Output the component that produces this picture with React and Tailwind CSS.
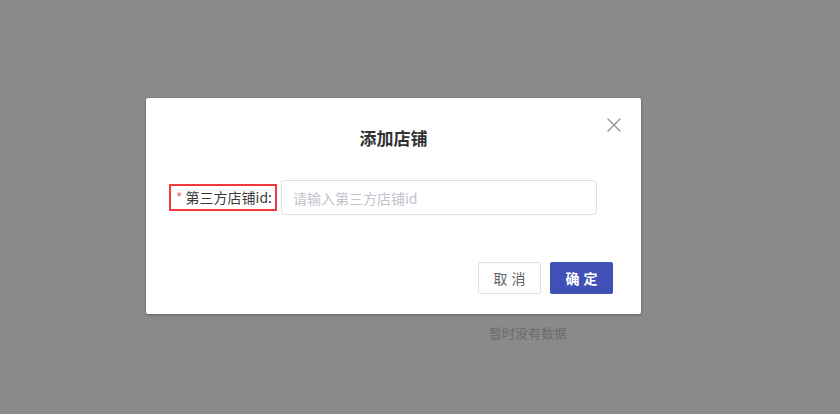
import React from "react";
import { X } from "lucide-react";

const font = { fontFamily: '"Noto Sans CJK SC", "Liberation Sans", sans-serif' };

const App = () => {
  return (
    <div className="relative w-[840px] h-[414px] bg-[#8a8a8a] overflow-hidden" style={font}>
      {/* page content under the mask */}
      <div className="absolute left-[489px] top-[323px] text-[13px] text-[#6b6b6b]">暂时没有数据</div>

      <div className="absolute left-[146px] top-[98px] w-[495px] h-[216px] bg-white rounded-[2px] shadow-[0_1px_3px_rgba(0,0,0,0.3)] flex flex-col">
        <div className="relative h-[78px] flex items-center justify-center">
          <span className="text-[17px] font-bold text-[#303133] mt-[1px]">添加店铺</span>
          <button className="absolute right-[15px] top-[15px] text-[#909399]">
            <X size={24} strokeWidth={1.4} />
          </button>
        </div>

        <div className="flex items-center px-[23px] mt-[4px]">
          <div className="h-[27px] w-[108px] border-2 border-[#ee3a3a] flex items-center pl-[5px] text-[14px] text-[#3a3a3a]">
            <span className="text-[#f56c6c] mr-[3px]">*</span>
            <span>第三方店铺id:</span>
          </div>
          <input
            className="ml-[4px] w-[316px] h-[35px] border border-[#dcdfe6] rounded-[4px] px-[11px] text-[14px] outline-none placeholder:text-[#c0c4cc]"
            placeholder="请输入第三方店铺id"
          />
        </div>

        <div className="flex justify-end gap-[9px] pr-[28px] mt-[47px]">
          <button className="w-[63px] h-[32px] border border-[#dcdfe6] rounded-[2px] text-[14px] text-[#606266] tracking-[4px] pl-[4px]">
            取消
          </button>
          <button className="w-[63px] h-[32px] bg-[#3f51b5] rounded-[2px] text-[14px] text-white font-bold tracking-[4px] pl-[4px]">
            确定
          </button>
        </div>
      </div>
    </div>
  );
};

export default App;
